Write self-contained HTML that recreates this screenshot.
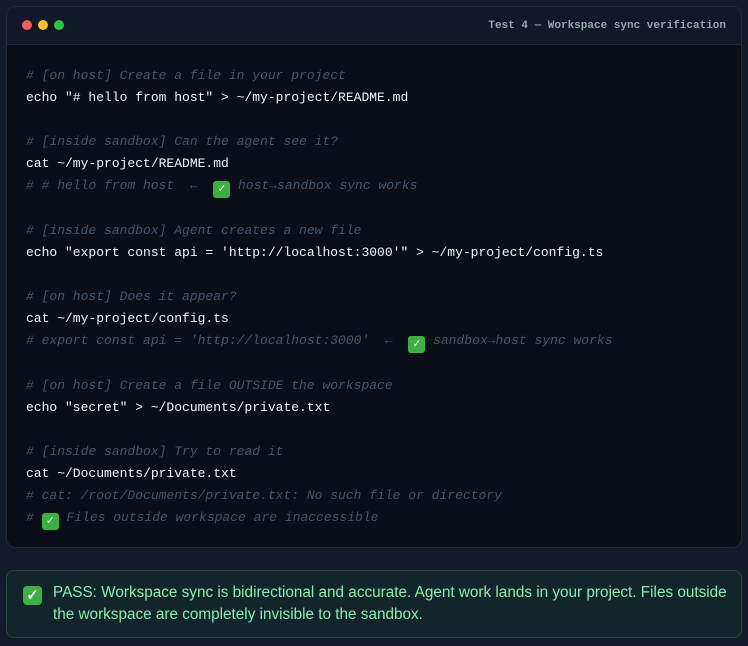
<!DOCTYPE html>
<html><head><meta charset="utf-8"><style>
body{margin:0;width:748px;height:646px;background:#131a2a;font-family:"Liberation Sans",sans-serif;overflow:hidden}
.term{position:absolute;left:6px;top:6px;width:734px;height:540px;border:1px solid #1f2a40;border-radius:10px;background:#0a0e19;overflow:hidden}
.hdr{height:37px;background:#111827;border-bottom:1px solid #1f2a40;position:relative}
.dot{position:absolute;top:13px;width:10px;height:10px;border-radius:50%}
.title{position:absolute;right:15px;top:13px;font:bold 11px "Liberation Mono",monospace;color:#94a3b8}
.code{position:absolute;left:19px;top:58px;font:13px/22px "Liberation Mono","DejaVu Sans Mono",monospace;color:#f1f5f9;white-space:pre}
.c{color:#475569;font-style:italic}
.pass{position:absolute;left:6px;top:570px;width:734px;height:66px;border:1px solid #1e4a3f;border-radius:8px;background:#12252a}
.pt{position:absolute;left:46px;top:11px;width:685px;color:#86efac;font-size:15.3px;line-height:22px}
.ck{position:absolute;left:16px;top:15px;width:19px;height:19px;border-radius:4px;background:#3cb043;color:#fff;font-size:15px;font-weight:bold;text-align:center;line-height:19px}
.ec{display:inline-block;width:17px;height:17px;border-radius:3px;background:#3cb043;color:#fff;font-size:12px;font-style:normal;text-align:center;line-height:17px;vertical-align:-3px;font-weight:bold}
</style></head><body>
<div class="term"><div class="hdr">
<div class="dot" style="left:15px;background:#ef5f57"></div>
<div class="dot" style="left:31px;background:#febc2e"></div>
<div class="dot" style="left:47px;background:#28c840"></div>
<div class="title">Test 4 — Workspace sync verification</div></div>
<div class="code"><span class="c"># [on host] Create a file in your project</span>
echo "# hello from host" &gt; ~/my-project/README.md

<span class="c"># [inside sandbox] Can the agent see it?</span>
cat ~/my-project/README.md
<span class="c"># # hello from host  ←  <span class="ec">✓</span> host→sandbox sync works</span>

<span class="c"># [inside sandbox] Agent creates a new file</span>
echo "export const api = 'http://localhost:3000'" &gt; ~/my-project/config.ts

<span class="c"># [on host] Does it appear?</span>
cat ~/my-project/config.ts
<span class="c"># export const api = 'http://localhost:3000'  ←  <span class="ec">✓</span> sandbox→host sync works</span>

<span class="c"># [on host] Create a file OUTSIDE the workspace</span>
echo "secret" &gt; ~/Documents/private.txt

<span class="c"># [inside sandbox] Try to read it</span>
cat ~/Documents/private.txt
<span class="c"># cat: /root/Documents/private.txt: No such file or directory</span>
<span class="c"># <span class="ec">✓</span> Files outside workspace are inaccessible</span></div>
</div>
<div class="pass"><div class="ck">✓</div><div class="pt">PASS: Workspace sync is bidirectional and accurate. Agent work lands in your project. Files outside the workspace are completely invisible to the sandbox.</div></div>
</body></html>
